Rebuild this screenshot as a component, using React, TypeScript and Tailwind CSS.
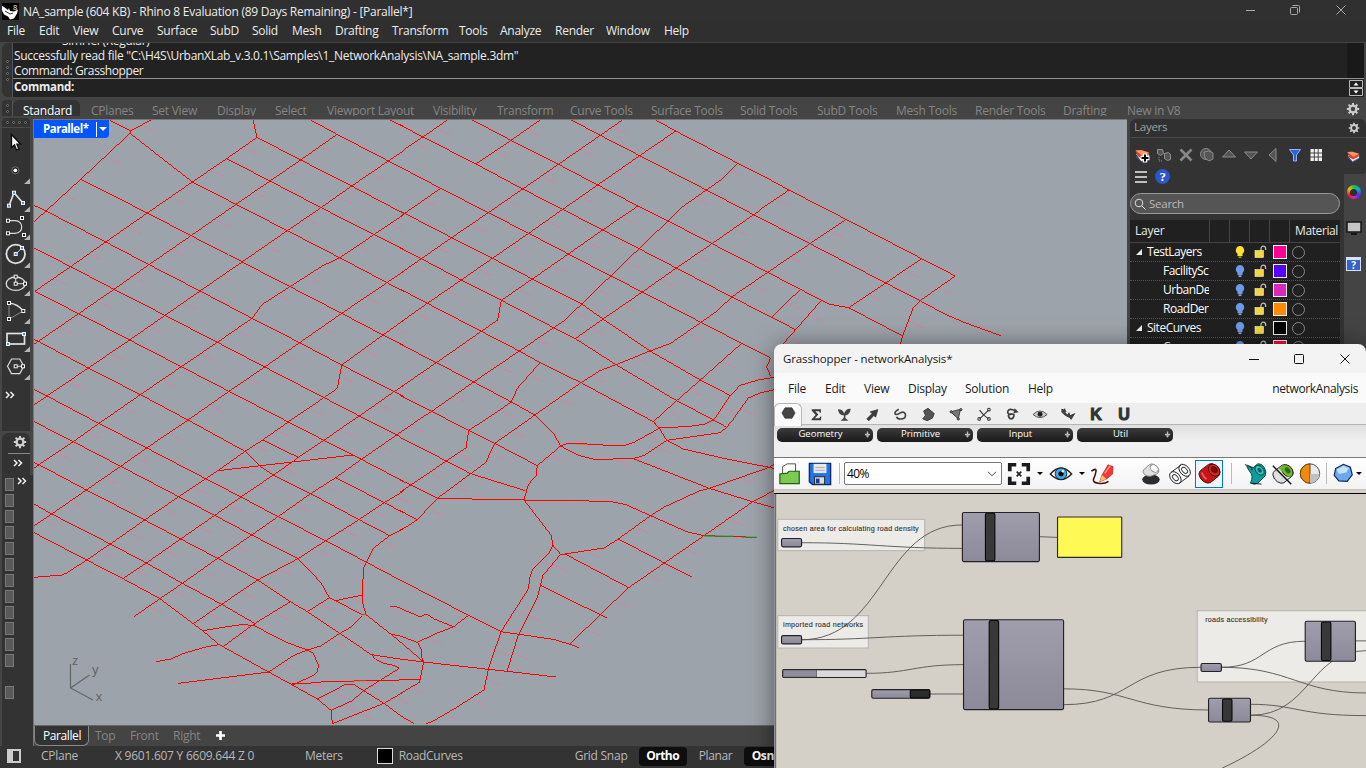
import React from "react";

const UI = "font-['Open_Sans','Noto_Sans',sans-serif]";

type Item = [number, string];

/* Text items laid out left to right, each cell as wide as the distance to the next start. */
function Strip({ items, className = "" }: { items: Item[]; className?: string }) {
  return (
    <div className={"flex whitespace-nowrap " + className} style={{ paddingLeft: items[0][0] }}>
      {items.map(([x, t], i) => (
        <span key={t} className="shrink-0" style={{ width: i < items.length - 1 ? items[i + 1][0] - x : undefined }}>
          {t}
        </span>
      ))}
    </div>
  );
}

/* ---------- road network ---------- */

type Tile = { x: number; y: number; lines: string[] };

const tiles: Tile[] = [
  {
    x: 34,
    y: 120,
    lines: [
      "228,2 290,33 350,0",
      "290,33 288,40 475,186 606,253 760,332 917,413 1110,515",
      "140,178 340,279 471,347 624,426 768,500 923,580 1047,645 1110,677",
      "0,256 36,273 215,366 345,434 498,513 654,595 797,668 923,735 1080,815 1110,830",
      "0,384 110,440 240,508 393,586 550,667 692,741 870,833 976,888 1000,900",
      "2,514 134,581 287,660 442,740 585,814 750,899",
      "0,658 13,664 163,744 319,824 462,900",
      "0,808 39,828 175,900",
      "657,0 669,52 800,120 953,198 1110,281",
      "578,116 708,183 861,263 1020,344 1110,389",
      "830,0 909,43 1063,123 1110,147",
      "1068,0 1110,20",
      "288,40 140,178 36,273 0,305",
      "669,52 578,116 475,186 340,279 215,366 110,440 2,514",
      "909,43 800,120 708,183 606,253 471,347 345,434 240,508 134,581 13,664 0,673",
      "1110,92 1063,123 953,198 861,263 760,332 624,426 498,513 393,586 287,660 163,744 39,828 0,855",
      "1110,283 1020,344 917,413 865,438 768,500 685,553 654,595 550,667 442,740 319,824 210,900",
      "1110,453 1059,488 923,580 797,668 692,741 585,814 462,900",
      "1110,600 1047,645 923,735 910,805 870,833 770,900",
      "1110,796 1080,815 976,888 957,900",
    ],
  },
  {
    x: 400,
    y: 120,
    lines: [
      "767,0 827,33 1014,130 1082,165",
      "514,0 601,46 719,107 919,210 1061,284 1082,295",
      "217,0 333,61 475,133 593,195 714,258 804,303 936,371 1082,446",
      "0,15 69,51 228,132 368,207 488,268 608,330 717,386 829,444 995,531 1082,575",
      "0,141 122,205 265,278 386,340 505,402 632,468 727,516 903,607 1025,670 1110,713",
      "0,274 14,280 155,353 277,415 397,477 545,552 609,597 750,693 901,780 990,826",
      "0,384 64,416 184,480 304,541 461,623 526,656 648,734 830,842 941,900 980,922",
      "0,507 82,550 244,634 358,693 420,728 543,788 760,905 776,922",
      "0,672 109,728 221,786 334,846 404,885 420,900",
      "0,826 95,874 145,900",
      "142,0 69,51 12,89",
      "420,0 333,61 228,132",
      "667,0 601,46 475,133 368,207 265,278 155,353 64,416 0,461",
      "827,33 719,107 593,195 488,268 386,340 277,415 184,480 82,550 0,608",
      "714,258 608,330 505,402 397,477 304,541 293,600 244,634 109,728 0,803",
      "1014,130 968,176 919,210 848,260 804,303 717,386 632,468 545,552 493,602 461,623 358,693 221,786 95,874 55,900",
      "1080,271 1061,284 936,371 829,444 727,516 609,597 526,656",
      "122,205 14,280 0,290",
      "1103,457 995,531 953,572 903,607 812,670 750,693 648,734 600,752 543,788 404,885 384,900",
      "1025,670 901,780 830,842 760,905",
      "420,728 352,805 334,846 255,900",
      "1130,771 1075,780 1020,796 990,828 941,900",
      "1130,808 1082,818 1045,834 998,900",
      "1112,713 1100,742 1112,768",
    ],
  },
  {
    x: 760,
    y: 120,
    lines: [
      "0,163 87,210 258,298 485,416 586,468 480,542 460,562 428,648 419,680",
      "0,294 150,371 377,489 480,542 550,580 612,607 722,647",
      "0,446 23,457 121,508 184,541 210,553 266,563 428,648",
      "0,574 35,592 107,629",
      "121,508 35,592",
      "184,541 107,629 62,680",
      "485,416 377,489 266,563",
      "258,298 150,371 23,457",
      "87,210 0,269",
    ],
  },
  {
    x: 34,
    y: 420,
    lines: [
      "0,5 118,65 260,139 434,230 542,286 653,345 792,416 860,487 886,533 905,542 984,584",
      "0,128 15,134 157,210 332,300 440,357 551,415 671,480 769,545 820,575 918,640 1012,704",
      "0,252 53,282 229,372 337,429 445,490 563,553 662,610 662,618 760,668 820,690 838,700 853,735 851,755 835,768 775,795",
      "0,338 158,420 267,476 378,536 478,611 506,632 555,674 567,680 704,756 775,795 850,837 891,871 895,911 1050,850 1110,815",
      "175,0 195,10 338,84 515,176 621,231 732,290 875,362 996,426 1098,480",
      "462,0 633,94 680,140 718,165 830,221 975,299 1067,347 1110,325",
      "686,60 793,112",
      "750,0 763,6 870,61 982,118 1110,185",
      "905,173 1051,248 1110,279",
      "1000,0 1088,45 1098,50",
      "210,0 195,10 118,65 15,134 0,145",
      "462,0 338,84 260,139 157,210 53,282 0,318",
      "770,0 763,6 686,60 633,94 552,152 515,176 434,230 332,300 229,372 158,420 100,458 85,465 0,472",
      "957,0 870,61 793,112 775,126 718,165 621,231 542,286 440,357 337,429 267,476",
      "1098,37 1088,45 982,118 905,173 830,221 732,290 653,345 551,415 445,490 378,536 301,589",
      "552,152 680,137 775,126 958,105",
      "1110,212 1051,248 975,299 875,362 792,416 671,480 563,553 478,611",
      "1067,347 1018,385 990,440 985,500 985,545 996,584 984,584",
      "769,545 660,612 567,680",
      "506,632 560,623 630,613 662,618",
      "367,725 410,717 455,698 520,680 555,674",
      "432,790 704,756 780,706 820,690 860,678 918,640 948,623 984,588",
      "820,575 886,533",
      "905,542 985,525",
      "996,584 1070,642 1098,665",
      "1070,642 1098,648",
      "1068,559 1090,561 1104,567",
      "1012,704 1098,717",
      "1012,704 1025,718 1050,730 1080,736 1096,745 1040,780 989,812 955,842 891,871",
      "775,792 800,792 870,785 1098,780",
      "850,837 935,793 962,795 989,812 1050,850 1098,886",
    ],
  },
  {
    x: 400,
    y: 420,
    lines: [
      "0,38 55,0",
      "145,0 206,31 284,70 412,137 482,78 460,40 420,0",
      "255,0 206,31 198,84 139,123 33,195 0,217",
      "384,0 284,70 257,128 212,161 112,235 52,299 20,320 0,330",
      "0,52 139,123 212,161 376,212",
      "0,180 33,195 112,235 372,240 630,244 678,254 752,287 860,335 912,347 1069,352",
      "412,137 408,168 385,193 372,240 453,345 459,376 482,403 495,402 612,384 655,357 752,287 795,260 900,212 928,205 1108,142 1125,130",
      "482,78 505,70 560,72 640,77 680,75 700,68 778,25 760,5",
      "778,24 870,19 912,13 941,0",
      "482,78 535,106 582,118 700,116 735,105 800,61 778,25",
      "800,61 960,38 980,22 998,0",
      "800,61 850,87 980,117 1108,142 1125,147",
      "700,116 928,205 1057,245 1125,264",
      "1125,210 1057,246 912,347 793,429 686,503 600,584 511,672",
      "655,357 793,429 877,471",
      "495,402 686,503",
      "459,376 445,402 397,450 390,470 385,507 303,635 265,748 252,810 165,865 100,903 78,911",
      "482,403 428,467 422,495 412,533 355,645 321,754",
      "422,496 600,584 620,594",
      "0,480 206,586 303,635 460,658 511,673 536,683",
      "206,586 161,620 105,598 80,582 60,590 0,565",
      "161,620 110,640 52,667 63,685 64,710 71,726 60,780 60,786 0,821",
      "0,648 52,667",
      "0,665 71,726",
      "0,717 71,726 265,748 321,754 468,771",
      "0,780 60,779",
      "0,272 52,299",
      "0,886 42,911",
    ],
  },
];

type Tag = { x: number; y: number; edge: boolean };

function tagsOf(lines: string[]): Tag[] {
  const out: Tag[] = [];
  for (const l of lines) {
    const p = l.split(" ").map((s) => s.split(",").map(Number));
    for (let i = 1; i < p.length; i++) {
      const [x1, y1] = p[i - 1];
      const [x2, y2] = p[i];
      if (Math.hypot(x2 - x1, y2 - y1) < 62) continue;
      const rising = (y2 - y1) * (x2 - x1) < 0;
      const mx = (x1 + x2) / 2;
      const my = (y1 + y2) / 2;
      out.push(rising ? { x: mx + 26, y: my + 10, edge: false } : { x: mx - 4, y: my - 6, edge: true });
    }
  }
  return out;
}

function Viewport() {
  return (
    <svg viewBox="34 120 1093 605" className="block h-[605px] w-[1093px] bg-[#9da3aa]">
      {tiles.map((t, i) => (
        <g key={i} transform={`translate(${t.x} ${t.y}) scale(0.33333)`} fill="none">
          {tagsOf(t.lines).map((g, k) => (
            <path
              key={k}
              d={g.edge ? `M${g.x - 11} ${g.y - 6}l22 11` : `M${g.x - 15} ${g.y - 7}l10 3l5 5l5 0l5 4l8 2`}
              stroke="#ff6a9a"
              strokeWidth={g.edge ? 2 : 2.8}
              strokeDasharray={k % 2 ? "6 3 9 2" : "9 3 4 2"}
              opacity={g.edge ? 0.5 : 0.8}
            />
          ))}
          {t.lines.map((l) => (
            <polyline key={l} points={l} stroke="#ff0000" strokeWidth={3} shapeRendering="crispEdges" />
          ))}
        </g>
      ))}
      <path d="M704 535.8L733 536.3M741 537L757 537.3" stroke="#2c8a2c" strokeWidth="1.2" />
      <path d="M575 444.200L588 444.500M352 681L366 680.700M361 614.6h6" stroke="#ff5a00" strokeWidth="1" opacity=".6" />
      <g stroke="#636669" strokeWidth="1.2" fill="none">
        <path d="M70.500 664V688L93 700M70.500 688L89.500 675" />
      </g>
      <g fill="#5e6164" fontSize="13" fontFamily="Open Sans">
        <text x="72" y="665">z</text>
        <text x="92" y="674">y</text>
        <text x="95.500" y="700.500">x</text>
      </g>
    </svg>
  );
}

/* ---------- left toolbar ---------- */

const Sq = ({ x, y, b }: { x: number; y: number; b?: boolean }) => (
  <rect x={x - 1.5} y={y - 1.5} width="3" height="3" fill={b ? "#4a90f0" : "#222"} stroke="#f2f2f2" strokeWidth={1} />
);

const tools: React.ReactNode[] = [
  <path d="M11.500 6.500v13l3-2.600 2 5 2.400-1-2-4.700h3.800z" fill="#f4f4f4" stroke="#0a0a0a" strokeWidth="1.300" />,
  <g><circle cx="15.300" cy="14.300" r="3.500" fill="#111" stroke="#999" strokeWidth=".7" /><circle cx="15.300" cy="14.300" r="1.900" fill="#fff" /></g>,
  <g><path d="M9 21.700L14 8.700L23 19" fill="none" stroke="#ddd" strokeWidth="1.700" /><Sq x={9} y={21.7} b /><Sq x={14} y={8.7} b /><Sq x={23} y={19} b /></g>,
  <g><path d="M8 8.700h7c9 0 9 12.600 0 12.600H8" fill="none" stroke="#ddd" strokeWidth="1.200" /><Sq x={8} y={8.7} /><Sq x={22} y={6} /><Sq x={8} y={21.3} /><Sq x={24} y={23} /></g>,
  <g><circle cx="15.700" cy="14" r="9.300" fill="none" stroke="#e2e2e2" strokeWidth="1.800" /><path d="M15.700 14L22 8" stroke="#ddd" /><Sq x={15.7} y={14} b /><Sq x={22} y={8} b /></g>,
  <g><ellipse cx="15.700" cy="15.700" rx="9.500" ry="6.700" fill="none" stroke="#ddd" strokeWidth="1.300" /><path d="M15.700 8.700v7h9.300" fill="none" stroke="#ddd" /><Sq x={15.7} y={15.7} /><Sq x={15.7} y={8.7} /><Sq x={25} y={15.7} /></g>,
  <g><path d="M9 23V7" stroke="#888" /><path d="M9 23L23.300 15" stroke="#888" /><path d="M9 7q9 1 14.300 8" fill="none" stroke="#ddd" strokeWidth="1.300" /><Sq x={9} y={7} /><Sq x={23.3} y={15} /><Sq x={9} y={23} /></g>,
  <g><rect x="7" y="9.500" width="17.500" height="10.500" fill="none" stroke="#e2e2e2" strokeWidth="1.700" /><Sq x={24} y={10} b /><Sq x={8} y={20} b /></g>,
  <g><path d="M7.500 14.300L11.500 7h8.300l4 7.300-4 7.300h-8.300z" fill="none" stroke="#ddd" strokeWidth="1.200" /><path d="M15.700 14.300H23" stroke="#ddd" /><Sq x={15.7} y={14.3} /><Sq x={23} y={14.3} /></g>,
];

const Chevrons = ({ className = "" }: { className?: string }) => (
  <svg viewBox="0 0 10 8" className={"h-2 w-2.5 " + className}>
    <path d="M1 1l3 3-3 3M5.500 1l3 3-3 3" fill="none" stroke="#f0f0f0" strokeWidth="1.500" />
  </svg>
);

function Gear({ className = "" }: { className?: string }) {
  return (
    <svg viewBox="0 0 16 16" className={className}>
      <circle cx="8" cy="8" r="3.900" fill="none" stroke="currentColor" strokeWidth="2.600" />
      <g stroke="currentColor" strokeWidth="2.300">
        <path d="M8 1v2.500M8 12.500V15M1 8h2.500M12.500 8H15M3 3l1.800 1.800M11.200 11.200L13 13M3 13l1.800-1.800M11.200 4.800L13 3" />
      </g>
    </svg>
  );
}

const Dots = ({ n, col }: { n: number; col?: boolean }) => (
  <div className={col ? "flex flex-col items-center gap-[3px]" : "flex items-center justify-center gap-[3px]"}>
    {Array.from({ length: n }, (_, i) => (
      <span key={i} className="size-[3px] shrink-0 rounded-full border border-[#777] bg-[#222]" />
    ))}
  </div>
);

function LeftBar() {
  return (
    <aside className="-mt-px flex w-[33px] shrink-0 flex-col bg-[#464646] pl-0.5">
      <div className="h-[313px] w-7 rounded-t bg-[#333]">
        <div className="flex h-2.5 items-center justify-center border-b border-[#4a4a4a]"><Dots n={4} /></div>
        {tools.map((t, i) => (
          <svg key={i} viewBox="2 0 28 28" className="block size-7">
            {t}
            {i > 0 && <path d="M30 22.500v6h-6.500z" fill="#b5b5b5" />}
          </svg>
        ))}
        <Chevrons className="mt-[11px] ml-[3px]" />
      </div>
      <div className="mt-0.5 flex h-[42px] w-7 flex-col rounded-t-md bg-[#333]">
        <Gear className="mt-[2px] ml-[11px] size-3.5 text-[#d0d0d0]" />
        <div className="mt-[4px] ml-1.5 h-px bg-[#888]" />
        <Chevrons className="mt-[5px] ml-[11px]" />
      </div>
      <div className="flex flex-1 bg-[#333]">
        <div className="mt-[3px] ml-[3px] flex w-[9px] flex-col gap-[3px]">
          {Array.from({ length: 14 }, (_, i) => (
            <div key={i} className={i === 12 ? "h-[13px]" : "h-[13px] border border-[#777] bg-[#595959]"} />
          ))}
        </div>
        <Chevrons className="mt-0.5 ml-[3px]" />
      </div>
    </aside>
  );
}

/* ---------- layers panel ---------- */

const layerIcon = (
  <g>
    <path d="M2 7l5.500 7.500L15 10.500V7z" fill="#f4f4f4" />
    <path d="M2 9.500l5.500 5L15 10.500" fill="none" stroke="#3b66c8" strokeWidth="1" />
    <path d="M1.500 3.500L7 3l8 2.500-.5 3-6.500 3.500L3.500 9z" fill="#d9402a" />
    <path d="M1.500 3.500L7 3l8 2.500-6.500 3.500z" fill="#ff9468" />
  </g>
);

const layerTools: React.ReactNode[] = [
  <g>{layerIcon}<path d="M11 6.500v9M6.500 11h9" stroke="#fff" strokeWidth="4.500" /><path d="M11 7.500v7M7.500 11h7" stroke="#000" strokeWidth="2" /></g>,
  <g fill="#555" stroke="#909090"><path d="M1.500 2.500h5l1 4-3 2-3-2z" /><path d="M8.500 6.500l4-1 2 2v5l-3 1-3-2z" /><path d="M3 10v4h3" fill="none" strokeDasharray="1 1" /></g>,
  <path d="M2.500 2.500l11 11M13.500 2.500l-11 11" stroke="#888" strokeWidth="2.600" />,
  <g fill="#555" stroke="#8c8c8c"><circle cx="7" cy="7" r="5.500" /><path d="M5 5l5-1 4 2v6l-4 2-4-3z" /></g>,
  <path d="M8 3l6.500 7h-13z" fill="#555" stroke="#8c8c8c" />,
  <path d="M8 12L1.500 5h13z" fill="#555" stroke="#8c8c8c" />,
  <path d="M4 8l7-6.500v13z" fill="#555" stroke="#8c8c8c" />,
  <path d="M2.500 2.500h11L9.500 8v6h-3V8z" fill="#2e62d8" stroke="#8fb2ff" />,
  <g><rect x="2.500" y="2" width="11.500" height="12" fill="#f2f2f2" /><path d="M2 6h12M2 10h12M6.300 2v12M10.200 2v12" stroke="#333" strokeWidth=".9" /></g>,
];

type LayerRow = { name: string; child?: boolean; on?: boolean; color: string };
const rows: LayerRow[] = [
  { name: "TestLayers", on: true, color: "bg-[#ff0096]" },
  { name: "FacilitySc", child: true, color: "bg-[#5500ff]" },
  { name: "UrbanDe", child: true, color: "bg-[#d52bbd]" },
  { name: "RoadDer", child: true, color: "bg-[#ff8c00]" },
  { name: "SiteCurves", color: "bg-black" },
  { name: "Curves", child: true, color: "bg-[#f01040]" },
];

function LayersPanel() {
  return (
    <aside className={"flex w-[239px] shrink-0 bg-[#444] pl-[3px] text-[12px] tracking-[-0.25px] " + UI}>
      <div className="w-[236px]">
        <div className="flex h-[19px] items-center justify-between rounded-t-md border-b border-[#4a4a4a] bg-[#303030] pr-1.5 pl-1 text-[11.5px] text-[#a0a0a0]">
          <span className="-mt-0.5">Layers</span>
          <Gear className="size-3 text-[#ccc]" />
        </div>
        <div className="flex">
          <div className="w-[214px] bg-[#333]">
            <div className="flex h-[30px] items-end gap-[5.8px] pl-1">
              {layerTools.map((t, i) => (
                <svg key={i} viewBox="0 0 16 16" className="mb-[5px] size-4 shrink-0">{t}</svg>
              ))}
            </div>
            <div className="flex h-[25px] items-center gap-2 pl-[5px]">
              <svg viewBox="0 0 12 12" className="mt-[-7px] size-3"><path d="M0 1h12M0 6h12M0 11h12" stroke="#eee" strokeWidth="1.700" /></svg>
              <span className="mt-[-8px] flex size-[15px] items-center justify-center rounded-full bg-[#2c56cc] font-['Liberation_Serif'] text-[13px] leading-none font-bold text-white">?</span>
            </div>
            <div className="flex h-[21px] w-[210px] items-center gap-[3px] rounded-full border border-[#999] bg-[#555] pl-[3px] text-[11.5px] text-[#bbb]">
              <svg viewBox="0 0 12 12" className="size-3"><circle cx="5" cy="5" r="3.800" fill="none" stroke="#ddd" /><path d="M8 8l3.500 3.500" stroke="#ddd" /></svg>
              Search
            </div>
            <div className="mt-[6px] w-[210px] bg-[#202020] text-white">
              <div className="grid h-[23px] grid-cols-[80px_20px_20px_20px_20px_50px] items-center border-b border-[#444] text-[#e8e8e8]">
                {["Layer", "", "", "", "", "Material"].map((h, i) => (
                  <div key={i} className={"flex h-full items-center pl-[5px] " + (i < 5 ? "border-r border-[#444]" : "tracking-[-0.4px]")}>{h}</div>
                ))}
              </div>
              {rows.map((r) => (
                <div key={r.name} className="grid h-[19px] grid-cols-[80px_20px_20px_20px_20px_50px] items-center border-b border-dotted border-[#555]">
                  <div className={"flex items-center overflow-hidden tracking-[-0.5px] whitespace-nowrap " + (r.child ? "mr-px pl-[33px]" : "pl-[5px]")}>
                    {!r.child && <svg viewBox="0 0 8 8" className="mr-[4px] size-2"><path d="M7 1v6H1z" fill="#eee" /></svg>}
                    {r.name}
                  </div>
                  <div />
                  <svg viewBox="0 0 20 16" className="h-4 w-5">
                    <path d="M10 2a4.300 4.300 0 0 1 2.500 7.700V12h-5V9.700A4.300 4.300 0 0 1 10 2z" fill={r.on ? "#ffe135" : "#6e9be6"} />
                    <path d="M8.500 12.300h3v1.800h-3z" fill={r.on ? "#a08a20" : "#8aa0c8"} />
                  </svg>
                  <svg viewBox="0 0 20 16" className="h-4 w-5">
                    <path d="M11 7V4.500a2.300 2.300 0 0 1 4.600 0V6" fill="none" stroke="#bbb" strokeWidth="1.300" />
                    <rect x="5" y="6.500" width="8.500" height="7" fill="#f2d544" stroke="#fff3a0" strokeWidth=".6" />
                  </svg>
                  <div className={"ml-[3px] size-3.5 border border-[#eee] " + r.color} />
                  <div className="ml-[2px] size-[13px] rounded-full border border-[#888]" />
                </div>
              ))}
            </div>
          </div>
          <div className="flex w-[22px] flex-col items-center rounded-tr bg-[#444]">
            <div className="flex h-9 w-full items-center justify-center rounded-br bg-[#333] pr-1 pb-px">
              <svg viewBox="0 0 16 16" className="size-3.5">{layerIcon}</svg>
            </div>
            <div className="mt-[11px] mr-[3px] size-3.5 rounded-full bg-[conic-gradient(#20c040,#00b0e0,#5030f0,#e020b0,#f02020,#f0c010,#20c040)] p-[3.5px]">
              <div className="size-full rounded-full bg-[#2e2e2e]" />
            </div>
            <svg viewBox="0 0 16 16" className="mt-[21px] mr-[3px] size-4"><rect x="1" y="2" width="14" height="10" fill="#c4c4c4" stroke="#161616" strokeWidth="1.500" /><path d="M5 14h6" stroke="#161616" strokeWidth="2" /></svg>
            <div className="mt-[21px] mr-[3px] flex h-3.5 w-[15px] items-center justify-center border-x border-t-[3px] border-b border-[#d5e2fa] bg-[#3462cc] text-[10px] leading-none font-bold text-white">?</div>
          </div>
        </div>
      </div>
    </aside>
  );
}

/* ---------- Grasshopper window ---------- */

const ghTabs: React.ReactNode[] = [
  <path d="M4.500 1.500h8L16 7.500l-3.500 6h-8L1 7.500z" fill="#444" stroke="#222" strokeWidth=".6" />,
  <path d="M3 2h10.500v4h-1.200q0-1.700-1.700-1.700H7.200L10.600 8l-3.800 4.200h4q1.800 0 2-2H14l-.5 4.300H3v-1.200L7.500 8.500 3 3.500z" fill="#3c3c3c" />,
  <path d="M8 9Q2 9 1 2q6 0 7 5Q10 1 15.500 1.500 15 8.500 9.500 9v3l3.500 3H4l3.500-3z" fill="#444" />,
  <path d="M2 13l6-6-2-2 8.500-2.500L12 11l-2-2-5.500 6z" fill="#3c3c3c" stroke="#3c3c3c" />,
  <path d="M6.500 2Q1 5 2.500 7.500q2.500 1.500 6-1.500 4-2 5.500 1.500 1 5-4 5.500-5 .5-6-2.500" fill="none" stroke="#444" strokeWidth="1.900" />,
  <path d="M3 4l5-3 7 6-2 5-6 3-5-2 3-4z" fill="#555" stroke="#333" />,
  <g fill="#777" stroke="#333"><path d="M2 5l11-3-2.500 11z" /><circle cx="2.500" cy="5" r="1.300" /><circle cx="13.500" cy="2.500" r="1.300" /><circle cx="10.500" cy="13" r="1.300" /></g>,
  <g fill="none" stroke="#333" strokeWidth="1.200"><path d="M3 3q4 6 10 10M13 3L3 13" /><circle cx="2.500" cy="13" r="1.500" /><circle cx="13.500" cy="2.500" r="1.500" /><circle cx="13.500" cy="13" r="1.500" /></g>,
  <g fill="none" stroke="#3c3c3c" strokeWidth="1.900"><path d="M12 4Q4 0 3 5q0 3 4 2.500T10 10t-3 3-3-3 7-2" /><path d="M11 1l4.500 4.500-6 1z" fill="#444" stroke="none" /></g>,
  <g><path d="M0 8q8-8 16 0-8 7-16 0z" fill="#ccc" stroke="#444" /><circle cx="8" cy="7.700" r="2.800" fill="#222" /></g>,
  <path d="M1 2l2 1 1-1.500 1.500 3L4.500 6l3 2.500L9 6l1 3.500L15.500 7l-4 6.500-1.500-2-5-2.500L1 5.500z" fill="#444" stroke="#333" />,
];

function Caret({ className = "" }: { className?: string }) {
  return <span className={"h-0 w-0 shrink-0 border-x-[3px] border-t-[3px] border-x-transparent border-t-black " + className} />;
}

const Ico = ({ ml, children }: { ml: string; children: React.ReactNode }) => (
  <svg viewBox="-1 -1 26 26" className={"size-6 shrink-0 " + ml}>{children}</svg>
);

const Tube = ({ body, lid, hole, s = "#111" }: { body: string; lid: string; hole: string; s?: string }) => (
  <g stroke={s} strokeWidth="1">
    <path d="M11 2.500Q14 .5 18 3t5 7.500q0 3-2 4.500l-8 6.500q-3 1.500-7-1t-5-7.500Q1 10 3 8.500z" fill={body} />
    <ellipse cx="16.800" cy="8.500" rx="6.800" ry="5.200" transform="rotate(48 16.800 8.500)" fill={lid} />
    <ellipse cx="17" cy="8" rx="3.600" ry="2.500" transform="rotate(48 17 8)" fill={hole} />
    <path d="M4 11q1 4 5 7" stroke="#fff" strokeWidth="1.800" opacity=".35" fill="none" />
  </g>
);

function GhToolbar() {
  return (
    <div className="flex h-[31px] items-center bg-gradient-to-b from-white to-[#f3f3f3] text-black">
      <Ico ml="ml-[4px]"><path d="M4 11V4l5-3h9v11" fill="#fff" stroke="#444" /><path d="M1 22.500V12l8-1 2-2h11v13.500z" fill="#7ccb50" stroke="#1d5c12" strokeWidth="1.300" /></Ico>
      <Ico ml="ml-[6px]"><path d="M.5.5h23v23H4l-3.500-3z" fill="#2474e8" stroke="#082a70" strokeWidth="1.500" /><rect x="5" y="1" width="14" height="10" fill="#e8e8e8" /><path d="M7 5h10M7 8h10" stroke="#aaa" /><rect x="6" y="15" width="11" height="8" fill="#ddd" stroke="#222" /><rect x="7.500" y="17" width="4" height="5" fill="#123f9c" /></Ico>
      <div className="ml-[7px] h-[21px] w-px bg-[#bbb]" />
      <div className="ml-1 flex h-[23px] w-[158px] items-center justify-between rounded-[2px] border border-[#777] bg-white pr-1 pl-0.5 text-[12px] tracking-[-0.6px]">
        40%
        <svg viewBox="0 0 10 6" className="h-1.5 w-2.5"><path d="M1 .8l4 4 4-4" fill="none" stroke="#444" /></svg>
      </div>
      <Ico ml="ml-[5px]"><path d="M2 9V2h7M15 2h7v7M22 15v7h-7M9 22H2v-7" fill="none" stroke="#1a1a1a" strokeWidth="4" /><path d="M9.500 9.500l5 5M14.500 9.500l-5 5" stroke="#222" strokeWidth="1.800" /></Ico>
      <Caret className="ml-[6px]" />
      <Ico ml="ml-[6px]"><path d="M.5 12Q12-1 23.500 12 12 24 .5 12z" fill="#fff" stroke="#222" strokeWidth="1.600" /><circle cx="12" cy="11.700" r="6.300" fill="#3da8e8" stroke="#123" /><circle cx="12" cy="11.700" r="2.800" fill="#000" /><circle cx="14" cy="9" r="1.300" fill="#fff" /></Ico>
      <Caret className="ml-[6px]" />
      <Ico ml="ml-[5px]"><path d="M9.500 20.500L12 13 18.500 2 24 4 23.500 12 17 17.500z" fill="#f03c38" stroke="#a01010" strokeWidth=".6" /><path d="M9.500 20.500L12 13l5 4.500z" fill="#f0bf70" /><path d="M15 11l6-8" stroke="#ff9a90" strokeWidth="1.500" /><path d="M.5 9Q6 5 5.500 9T3 17t5 5 11-2" fill="none" stroke="#4a1008" strokeWidth="1.700" /></Ico>
      <Ico ml="ml-[25px]"><ellipse cx="12" cy="18" rx="9.500" ry="5.500" fill="#2c2c2c" /><path d="M4 7.500q-1.500 2 .5 4.500 3 3 7 2.500L18 12q3-1 2.500-4.500T15 1.500q-3-1-5 .5z" fill="#dedede" stroke="#888" /><ellipse cx="15.500" cy="6" rx="4.800" ry="3.500" transform="rotate(40 15.500 6)" fill="#fafafa" stroke="#888" /></Ico>
      <Ico ml="ml-[5px]"><g fill="none" stroke="#222"><path d="M2.500 10L13 2.500M11.500 22l10.500-8" /><ellipse cx="17" cy="8" rx="7.500" ry="5" transform="rotate(48 17 8)" /><ellipse cx="17" cy="8" rx="4" ry="2.500" transform="rotate(48 17 8)" /><ellipse cx="7" cy="16" rx="7.500" ry="5" transform="rotate(48 7 16)" /><ellipse cx="7" cy="16" rx="4" ry="2.500" transform="rotate(48 7 16)" /></g></Ico>
      <div className="ml-[3px] flex h-7 w-7 shrink-0 items-center justify-center border border-[#0078d7] bg-[#eef6fd]">
        <svg viewBox="0 0 24 24" className="size-[23px]"><Tube body="#c81414" lid="#d42a20" hole="#7c0808" s="#5c0505" /></svg>
      </div>
      <div className="ml-2 h-[21px] w-px bg-[#bbb]" />
      <Ico ml="ml-[11px]"><path d="M3 4q5 0 7 1l5-4q4-1 7 4t1 9l-8 8q-3 2-8 0 4-8-1-13z" fill="#109c9c" stroke="#044" /><ellipse cx="17" cy="8" rx="6" ry="4" transform="rotate(48 17 8)" fill="#38c4c0" stroke="#044" /><ellipse cx="17" cy="8" rx="3" ry="2" transform="rotate(48 17 8)" fill="#0a6060" /><path d="M1 2q8 1 8 6M9 22l10 1" stroke="#111" fill="none" /></Ico>
      <Ico ml="ml-[4px]"><Tube body="#dcdcdc" lid="#7cc43a" hole="#2f6a10" /><path d="M7 6l12 10 3-3q1-3-1-6.500T15 2q-2-.5-3.500.8z" fill="#6cb828" opacity=".85" /><ellipse cx="17" cy="8" rx="3.600" ry="2.300" transform="rotate(48 17 8)" fill="#2f6a10" /><path d="M1 3l20 20" stroke="#111" strokeWidth="1.500" /></Ico>
      <Ico ml="ml-[3px]"><circle cx="12" cy="11.500" r="10.500" fill="#e9e9e9" stroke="#444" /><path d="M12 1a10.500 10.500 0 0 0 0 21z" fill="#ee8a10" stroke="#713900" /><path d="M12 12h10.300a10.300 10.300 0 0 1-10.300 9.800z" fill="#c0c0c0" /></Ico>
      <div className="ml-1 h-[21px] w-px bg-[#bbb]" />
      <Ico ml="ml-[4px]"><path d="M4 6L12.500 1.500 20 4.500 22 13 16.500 20 7.500 19.500 2.500 13.500z" fill="#6ba8ee" stroke="#0f2c62" strokeWidth="1.300" /><path d="M5 7l7.500-4 6 2.500-3 5-8 1.500z" fill="#c4e1ff" /></Ico>
      <Caret className="ml-px" />
    </div>
  );
}

function Node({ x, y, w, h, bar, bw = 25 }: { x: number; y: number; w: number; h: number; bar?: number; bw?: number }) {
  return (
    <g>
      <rect x={x} y={y} width={w} height={h} rx="4" fill="url(#node)" stroke="#222226" strokeWidth="3" />
      {bar !== undefined && <rect x={bar} y={y + 2} width={bw} height={h - 4} rx="4" fill="#383838" stroke="#0a0a0a" strokeWidth="3" />}
    </g>
  );
}

function Canvas() {
  return (
    <svg viewBox="0 0 1568 725.730" className="block h-[274px] w-[592px] bg-[#d4d0c8]">
      <defs>
        <linearGradient id="node" x1="0" y1="0" x2="0" y2="1">
          <stop offset="0" stopColor="#a09eac" />
          <stop offset="1" stopColor="#8c8a98" />
        </linearGradient>
      </defs>
      <g fill="#ecebe7" stroke="#bab8b3" strokeWidth="3">
        <rect x="10" y="67" width="389" height="83" />
        <rect x="10" y="322" width="240" height="86" />
        <rect x="1121" y="309" width="460" height="189" />
      </g>
      <g fill="none" stroke="#55534f" strokeWidth="2.400">
        <path d="M73 129C250 129 300 144 498 144" />
        <path d="M73 386C290 386 290 82 498 82" />
        <path d="M73 386C260 386 290 374 502 374" />
        <path d="M245 475C360 475 370 452 502 452" />
        <path d="M413 530H502" stroke="#85837f" strokeWidth="4" />
        <path d="M703 113L750 115" />
        <path d="M767 516C940 516 950 572 1150 572" />
        <path d="M767 558C950 558 930 459 1130 459" />
        <path d="M1185 459C1300 459 1290 390 1407 390" />
        <path d="M1185 459C1370 459 1390 527 1568 527" />
        <path d="M1263 557C1380 557 1390 587 1568 587" />
        <path d="M1263 586C1420 586 1420 415 1568 415" />
        <path d="M1263 586C1400 586 1330 660 1187 726" />
        <path d="M1540 389H1568" />
      </g>
      <Node x={499} y={49} w={204} h={130} bar={560} />
      <rect x="751" y="61" width="170" height="107" rx="2" fill="#fff955" stroke="#2b2b22" strokeWidth="3" />
      <Node x={502} y={333} w={265} h={238} bar={570} />
      <Node x={20} y={118} w={53} h={22} />
      <Node x={20} y={375} w={53} h={22} />
      <Node x={1131} y={449} w={54} h={21} />
      <Node x={1151} y={541} w={111} h={63} bar={1188} />
      <Node x={1407} y={337} w={133} h={106} bar={1450} />
      <rect x="23" y="465" width="221" height="21" rx="3" fill="#d9d9d9" stroke="#222" strokeWidth="3" />
      <rect x="24" y="466" width="88" height="19" fill="#908e9c" stroke="#333" strokeWidth="1.500" />
      <Node x={259} y={518} w={154} h={23} />
      <rect x="361" y="519" width="51" height="21" rx="3" fill="#2c2c2c" stroke="#0a0a0a" strokeWidth="3" />
      <g fontFamily="Liberation Sans" fontSize="19" fill="#333" stroke="#333" strokeWidth=".3">
        <text x="24" y="97" textLength="359">chosen area for calculating road density</text>
        <text x="24" y="352" textLength="212">imported road networks</text>
        <text x="1142" y="339" textLength="165">roads accessibility</text>
      </g>
      <path d="M0 0H5V726H0z" fill="#8c8f94" />
      <path d="M4.500 0V726" stroke="#555" strokeWidth="2" />
    </svg>
  );
}

function Grasshopper() {
  return (
    <section className={"absolute top-[344px] left-[774px] h-[424px] w-[592px] overflow-hidden rounded-t-lg bg-[#f3f3f3] text-[12px] tracking-[-0.25px] text-[#1a1a1a] " + UI}>
      <header className="flex h-[29px] items-center justify-between pr-[15px] pl-[9px] text-[11.5px] tracking-[-0.12px]">
        <span>Grasshopper - networkAnalysis*</span>
        <svg viewBox="0 0 104 12" className="h-3 w-[104px] shrink-0" fill="none" stroke="#111">
          <path d="M2 6.500h10M93.500 1.500l9 9M102.500 1.500l-9 9" />
          <rect x="47.500" y="1.500" width="9" height="9" rx="1" />
        </svg>
      </header>
      <nav className="relative flex h-[30px] items-center bg-[#fafafa] pt-px pr-2">
        <Strip items={[[14, "File"], [51, "Edit"], [90, "View"], [134, "Display"], [191, "Solution"], [254, "Help"]]} />
        <span className="ml-auto tracking-[-0.36px]">networkAnalysis</span>
      </nav>
      <div className="flex h-[22px] border-b border-[#b5b5b5] bg-[#eeeeee]">
        {ghTabs.map((t, i) => (
          <div key={i} className={"flex h-[23px] w-7 shrink-0 items-center justify-center " + (i === 0 ? "rounded-t-md border border-b-0 border-[#b5b5b5] bg-[#fcfcfc] pb-[3px]" : "")}>
            <svg viewBox="0 0 17 16" className="size-[15px]">{t}</svg>
          </div>
        ))}
        <div className="flex h-[23px] w-7 items-center justify-center font-['Liberation_Sans'] text-[16px] leading-none font-bold text-[#333] [-webkit-text-stroke:1px_#333]">K</div>
        <div className="flex h-[23px] w-7 items-center justify-center font-['Liberation_Sans'] text-[16px] leading-none font-bold text-[#333] [-webkit-text-stroke:1px_#333]">U</div>
      </div>
      <div className="h-8 bg-gradient-to-b from-[#dfdfdf] via-[#f0f0f0] to-[#f0f0f0] pt-[3px] pl-[3px]">
        <div className="flex gap-1">
          {["Geometry", "Primitive", "Input", "Util"].map((g) => (
            <div key={g} className="flex h-[13.5px] w-24 items-center rounded-[5px] bg-gradient-to-b from-[#3c3c3c] to-[#1a1a1a] pr-0.5 text-[9.5px] tracking-normal text-white">
              <span className="-mt-px flex-1 text-center">{g}</span>
              <svg viewBox="0 0 8 8" className="size-[7px]"><path d="M4 .5v6.500M1 4h6" stroke="#bbb" strokeWidth="1.600" fill="none" /><path d="M2 5h4L4 7.500z" fill="#bbb" /></svg>
            </div>
          ))}
        </div>
      </div>
      <div className="h-px bg-[#777]" />
      <GhToolbar />
      <div className="h-[4px] border-t border-[#c8c4bc] bg-[#d4d0c8]" />
      <div className="h-px bg-black" />
      <Canvas />
    </section>
  );
}

/* ---------- Rhino shell ---------- */

const menu: Item[] = [[7, "File"], [39, "Edit"], [73, "View"], [112, "Curve"], [157, "Surface"], [210, "SubD"], [252, "Solid"], [292, "Mesh"], [335, "Drafting"], [392, "Transform"], [459, "Tools"], [500, "Analyze"], [555, "Render"], [606, "Window"], [664, "Help"]];
const tabs: Item[] = [[16, "CPlanes"], [77, "Set View"], [142, "Display"], [200, "Select"], [252, "Viewport Layout"], [358, "Visibility"], [422, "Transform"], [495, "Curve Tools"], [576, "Surface Tools"], [665, "Solid Tools"], [742, "SubD Tools"], [821, "Mesh Tools"], [900, "Render Tools"], [988, "Drafting"], [1052, "New in V8"]];

export default function App() {
  return (
    <div className={"relative flex h-[768px] w-[1366px] flex-col overflow-hidden bg-[#444] text-[12px] tracking-[-0.25px] text-[#ececec] " + UI}>
      <header className="flex h-[22px] items-center bg-[#303030] pr-3.5 pl-0.5 text-[12px]">
        <svg viewBox="0 0 17 17" className="mr-1 size-[17px]">
          <rect width="17" height="17" fill="#000" />
          <path d="M0 3l2 1 4 3 1-2 1 3 4 .5 4-2-1 4-3 5-4 1-2-3-4-2-2-4z" fill="#fff" />
          <path d="M3 8l5 3 3-1" stroke="#000" strokeWidth=".8" fill="none" />
          <text x="11" y="6.500" fontSize="7.500" fill="#fff">8</text>
        </svg>
        <span className="mt-px">NA_sample (604 KB) - Rhino 8 Evaluation (89 Days Remaining) - [Parallel*]</span>
        <svg viewBox="0 0 106 12" className="-mt-0.5 ml-auto h-3 w-[106px]" fill="none" stroke="#a8a8a8">
          <path d="M-1 6.500h10M90.500 1.500l9 9M99.500 1.500l-9 9" />
          <rect x="44.500" y="3.500" width="7" height="7" rx="1" />
          <path d="M46.500 1.500h6q1 0 1 1v6" />
        </svg>
      </header>
      <nav className="flex h-[20px] items-center bg-[#2f2f2f]">
        <Strip items={menu} className="-mt-[3px]" />
      </nav>

      <section className="flex h-[57px] bg-[#444] pt-px pr-[2px] pl-0.5">
        <div className="flex h-[54px] w-[11px] shrink-0 flex-col items-center justify-center rounded-l-md border-r border-[#555] bg-[#333]"><Dots n={4} col /></div>
        <div className="flex h-[54px] flex-1 flex-col bg-[#222]">
          <div className="flex h-[35px]">
            <div className="flex flex-1 flex-col justify-end overflow-hidden pl-px text-[12px] leading-[15px] tracking-[-0.29px]">
              <div className="pl-[48px]">SimHei (Regular)</div>
              <div>Successfully read file "C:\H4S\UrbanXLab_v.3.0.1\Samples\1_NetworkAnalysis\NA_sample.3dm"</div>
              <div className="tracking-[-0.4px]">Command: Grasshopper</div>
            </div>
            <div className="w-[17px] bg-[#191919]" />
          </div>
          <div className="h-px bg-[#909090]" />
          <div className="flex flex-1 items-center justify-between pl-px text-[11.5px] font-bold">
            <span className="-mt-0.5">Command:</span>
            <svg viewBox="0 0 15 18" className="h-[18px] w-[15px]"><path d="M.5 1.500h13v7H.5zM.5 9.500h13v7H.5z" fill="#222" stroke="#bbb" /><path d="M4.500 6.500h5l-2.500-3zM4.500 11.500h5l-2.500 3z" fill="#fff" /></svg>
          </div>
        </div>
      </section>

      <section className="flex h-[20px] items-start bg-[#444] pl-0.5">
        <div className="mt-px flex h-[16px] w-[11px] shrink-0 flex-col items-center justify-center rounded-tl border-r border-[#555] bg-[#333]"><Dots n={2} col /></div>
        <div className="mt-px flex h-[16px] w-[67px] shrink-0 items-start overflow-hidden rounded-t-md bg-[#333] pl-2.5 leading-[22px] text-white">Standard</div>
        <div className="h-[17px] flex-1 overflow-hidden leading-[24px] text-[#858585]"><div className="-ml-[5px]"><Strip items={tabs} /></div></div>
        <Gear className="mt-[3px] mr-[6px] size-3.5 text-[#ccc]" />
      </section>

      <main className="flex h-[627px] shrink-0">
        <LeftBar />
        <div className="relative w-[1094px] shrink-0 border-t border-l border-[#777]">
          <Viewport />
          <div className="absolute top-0 left-0 flex h-[18px] w-[75px] items-center rounded-br bg-[#0055ff] pl-[9px] text-[11.5px] font-bold tracking-[-0.5px] text-white">
            Parallel*
            <span className="ml-auto h-[15px] w-px bg-white" />
            <span className="mx-0.5 h-0 w-0 border-x-[4px] border-t-[4px] border-x-transparent border-t-white" />
          </div>
          <div className="flex h-[21px] items-start border-t border-[#666] bg-[#444] text-[#858585]">
            <div className="flex h-[20px] w-[55px] items-center rounded-b-md border border-t-0 border-[#888] bg-[#333] pl-2 tracking-[-0.4px] text-white">Parallel</div>
            <Strip className="leading-[20px]" items={[[6, "Top"], [41, "Front"], [84, "Right"]]} />
            <svg viewBox="0 0 10 10" className="mt-[5px] ml-4 size-[9px]"><path d="M5 0v10M0 5h10" stroke="#fff" strokeWidth="3" /></svg>
          </div>
        </div>
        <LayersPanel />
      </main>

      <footer className="flex h-[22px] items-center bg-[#333] pb-0.5 pl-[7px] text-[#b8b8b8]">
        <svg viewBox="0 0 14 14" className="size-3.5 shrink-0"><path d="M1 1h12v12H1z" fill="#333" stroke="#ccc" strokeWidth="2" /><path d="M1 1h5v12H1z" fill="#ccc" /></svg>
        <Strip items={[[20, "CPlane"], [94, "X 9601.607 Y 6609.644 Z 0"], [284, "Meters"]]} />
        <span className="ml-[34px] size-4 shrink-0 border border-[#ddd] bg-black" />
        <span className="ml-[6px] w-[176px] tracking-[-0.3px]">RoadCurves</span>
        <span className="w-[64px]">Grid Snap</span>
        <span className="flex h-[19px] w-12 items-center justify-center rounded-sm bg-[#0e0e0e] font-bold tracking-[-0.5px] text-white">Ortho</span>
        <span className="ml-3 w-[45px] tracking-[-0.35px]">Planar</span>
        <span className="flex h-[19px] w-14 items-center rounded-sm bg-[#0e0e0e] pl-2 font-bold tracking-[-0.4px] text-white">Osnap</span>
      </footer>

      <div className="absolute top-[346px] left-[776px] h-[500px] w-[592px] rounded-lg shadow-[0_2px_26px_rgba(0,0,0,0.55)]" />
      <Grasshopper />
    </div>
  );
}
